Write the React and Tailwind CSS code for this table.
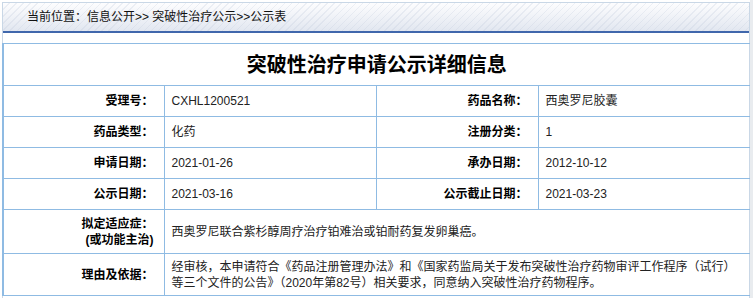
import React from "react";

const font = "font-['Liberation_Sans','Noto_Sans_CJK_SC',sans-serif]";

function Label({ children, className = "" }) {
  return (
    <td className={`border border-[#8fbbe3] text-right pr-[10px] font-bold text-black text-[12px] leading-[16px] ${className}`}>
      {children}
    </td>
  );
}

function Value({ children, colSpan, className = "" }) {
  return (
    <td colSpan={colSpan} className={`border border-[#8fbbe3] text-left pl-[7px] pr-[6px] text-[#222] text-[12px] leading-[16px] ${className}`}>
      {children}
    </td>
  );
}

export default function App() {
  return (
    <div className={`w-[753px] h-[298px] bg-white overflow-hidden flex ${font}`}>
      <div className="w-[750px] pl-[2px] pt-[2px] flex flex-col">
        <div className="border-t border-l border-r border-[#c9d7e6] flex flex-col flex-1">
          <div className="h-[30px] border-b-2 border-[#4067ac] flex items-center pl-[24px] text-[12px] text-[#111] bg-[image:repeating-linear-gradient(135deg,rgba(255,255,255,0)_0px,rgba(255,255,255,0)_4px,rgba(190,200,218,0.25)_4px,rgba(190,200,218,0.25)_5px),linear-gradient(to_bottom,#fdfdfe,#e2e7f0)]">
            当前位置：信息公开&gt;&gt; 突破性治疗公示&gt;&gt;公示表
          </div>
          <div className="h-[10px]" />
          <table className="table-fixed border-collapse w-[747px] -ml-[1px] border-l-2 border-[#8fbbe3]">
            <colgroup>
              <col className="w-[161px]" />
              <col className="w-[212px]" />
              <col className="w-[162px]" />
              <col className="w-[212px]" />
            </colgroup>
            <tbody>
              <tr className="h-[42px]">
                <td colSpan={4} className="border border-[#8fbbe3] text-center font-bold text-[20px] text-black leading-[24px]">
                  突破性治疗申请公示详细信息
                </td>
              </tr>
              <tr className="h-[31px]">
                <Label>受理号：</Label>
                <Value>CXHL1200521</Value>
                <Label>药品名称：</Label>
                <Value>西奥罗尼胶囊</Value>
              </tr>
              <tr className="h-[31px]">
                <Label>药品类型：</Label>
                <Value>化药</Value>
                <Label>注册分类：</Label>
                <Value>1</Value>
              </tr>
              <tr className="h-[31px]">
                <Label>申请日期：</Label>
                <Value>2021-01-26</Value>
                <Label>承办日期：</Label>
                <Value>2012-10-12</Value>
              </tr>
              <tr className="h-[31px]">
                <Label>公示日期：</Label>
                <Value>2021-03-16</Value>
                <Label>公示截止日期：</Label>
                <Value>2021-03-23</Value>
              </tr>
              <tr className="h-[44px]">
                <Label>
                  拟定适应症：
                  <br />
                  (或功能主治)
                </Label>
                <Value colSpan={3}>西奥罗尼联合紫杉醇周疗治疗铂难治或铂耐药复发卵巢癌。</Value>
              </tr>
              <tr className="h-[42px]">
                <Label>理由及依据：</Label>
                <Value colSpan={3}>
                  经审核，本申请符合《药品注册管理办法》和《国家药监局关于发布突破性治疗药物审评工作程序（试行）等三个文件的公告》（2020年第82号）相关要求，同意纳入突破性治疗药物程序。
                </Value>
              </tr>
            </tbody>
          </table>
        </div>
      </div>
      <div className="w-[3px] bg-[#e9ecef]" />
    </div>
  );
}
